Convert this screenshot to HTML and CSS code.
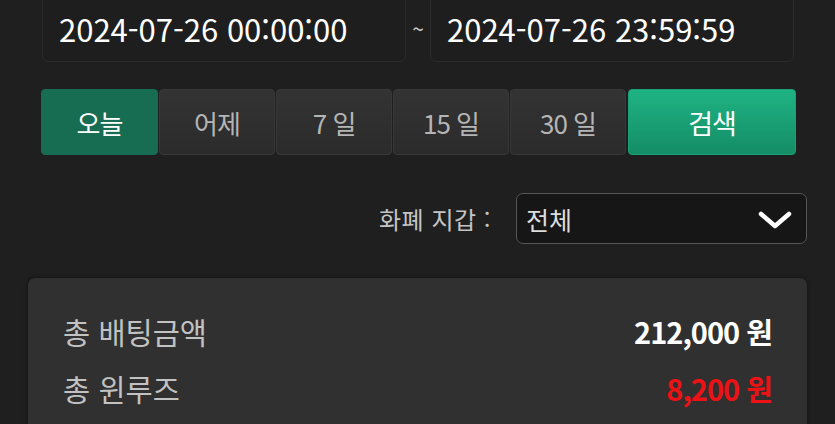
FILE: index.html
```
<!DOCTYPE html>
<html lang="ko">
<head>
<meta charset="utf-8">
<link rel="stylesheet" href="styles.css">
</head>
<body>
<div class="page">
  <div class="dates">
    <div class="date-box">2024-07-26 00:00:00</div>
    <div class="tilde">~</div>
    <div class="date-box">2024-07-26 23:59:59</div>
  </div>
  <div class="periods">
    <button class="btn btn-active">오늘</button>
    <button class="btn">어제</button>
    <button class="btn">7 일</button>
    <button class="btn">15 일</button>
    <button class="btn">30 일</button>
    <button class="btn btn-search">검색</button>
  </div>
  <div class="currency">
    <span class="currency-label">화폐 지갑 :</span>
    <div class="select">
      <span>전체</span>
      <svg class="chevron" width="34" height="20" viewBox="0 0 34 20"><path d="M3 4 L17 16 L31 4" fill="none" stroke="#fff" stroke-width="4.5" stroke-linecap="round" stroke-linejoin="round"/></svg>
    </div>
  </div>
  <div class="summary">
    <div class="row">
      <span class="row-label">총 배팅금액</span>
      <span class="row-value">212,000 원</span>
    </div>
    <div class="row">
      <span class="row-label">총 윈루즈</span>
      <span class="row-value red">8,200 원</span>
    </div>
  </div>
</div>
</body>
</html>
```
FILE: styles.css
```
* { box-sizing: border-box; }
html, body { margin: 0; padding: 0; }
body {
  background: #1f1f1f;
  font-family: "Noto Sans CJK KR", "Noto Sans", sans-serif;
  color: #fff;
  width: 835px;
  height: 424px;
  overflow: hidden;
}
.dates {
  display: flex;
  align-items: center;
  margin: -8px 0 0 42px;
  width: 752px;
}
.date-box {
  width: 364px;
  height: 70px;
  border: 1px solid #2b2b2b;
  border-radius: 6px;
  background: #1e1e1e;
  padding: 7px 0 0 16px;
  font-size: 31px;
  line-height: 58px;
  color: #fff;
}
.tilde {
  flex: 1;
  text-align: center;
  font-size: 21px;
  color: #ccc;
  margin-top: 2px;
}
.periods {
  display: flex;
  gap: 1px;
  margin: 27px 0 0 41px;
  height: 66px;
}
.btn {
  font-family: inherit;
  width: 116px;
  height: 66px;
  border: 1px solid #383838;
  border-radius: 4px;
  background: linear-gradient(#333333, #2b2b2b);
  color: #b5b5b5;
  font-size: 26px;
  padding: 0;
  letter-spacing: -1px;
}
.btn-active {
  width: 117px;
  background: #176d52;
  border-color: #176d52;
  color: #fff;
}
.btn-search {
  width: 168px;
  background: linear-gradient(#1fb382, #148d66);
  border-color: #1aa277;
  color: #fff;
  margin-left: 1px;
  font-size: 27px;
}
.currency {
  display: flex;
  justify-content: flex-end;
  align-items: center;
  width: 807px;
  margin-top: 38px;
  gap: 25px;
}
.currency-label {
  font-size: 24px;
  color: #c4c4c4;
  letter-spacing: 0.5px;
}
.select {
  width: 291px;
  height: 51px;
  border: 1px solid #555;
  border-radius: 7px;
  background: #161616;
  display: flex;
  align-items: center;
  justify-content: space-between;
  padding: 0 14px 0 9px;
  font-size: 25px;
  color: #ddd;
}
.chevron { display: block; margin-top: 2px; }
.summary {
  margin: 34px 0 0 28px;
  width: 779px;
  height: 170px;
  background: #303030;
  border-radius: 7px;
  box-shadow: 0 0 4px rgba(0,0,0,0.5);
  padding: 24px 35px 0 35px;
}
.row {
  display: flex;
  justify-content: space-between;
  align-items: center;
  height: 57px;
}
.row-label {
  font-size: 29.5px;
  color: #c2c2c2;
}
.row-value {
  font-size: 29px;
  font-weight: 700;
  color: #fff;
  letter-spacing: -1px;
}
.red { color: #ec1216; }
```
